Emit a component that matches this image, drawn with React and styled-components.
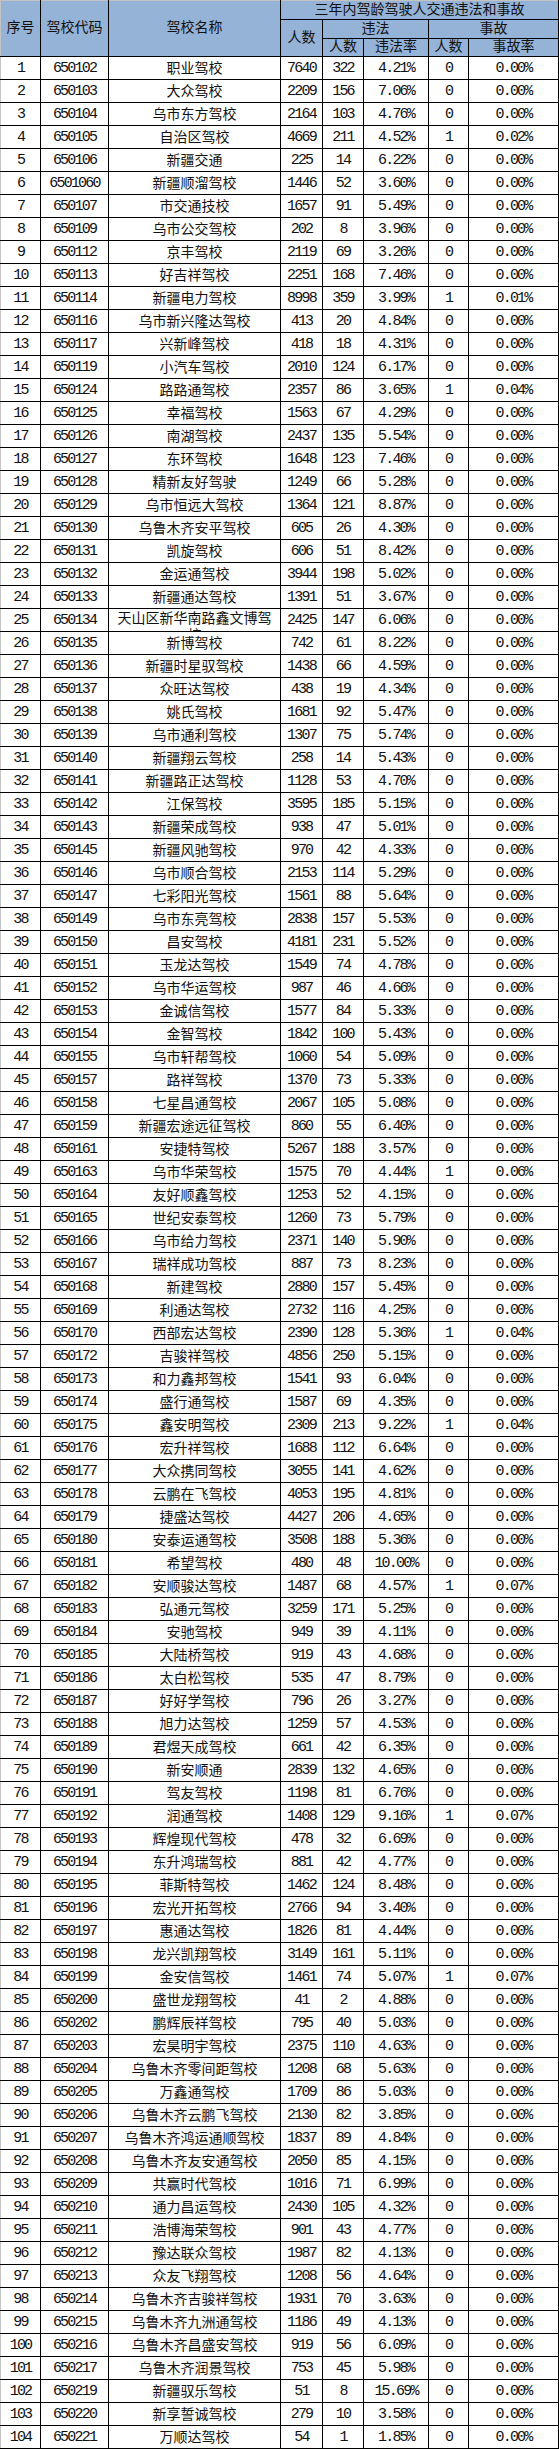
import React from 'react';
import styled, { createGlobalStyle } from 'styled-components';

const GlobalStyle = createGlobalStyle`
  html, body {
    margin: 0;
    padding: 0;
    background: #fff;
  }
  body {
    font-family: "Liberation Mono", "Noto Sans CJK SC", monospace;
    color: #111;
  }
`;

const RAW = `
650102 职业驾校 7640 322 4.21% 0 0.00%
650103 大众驾校 2209 156 7.06% 0 0.00%
650104 乌市东方驾校 2164 103 4.76% 0 0.00%
650105 自治区驾校 4669 211 4.52% 1 0.02%
650106 新疆交通 225 14 6.22% 0 0.00%
6501060 新疆顺溜驾校 1446 52 3.60% 0 0.00%
650107 市交通技校 1657 91 5.49% 0 0.00%
650109 乌市公交驾校 202 8 3.96% 0 0.00%
650112 京丰驾校 2119 69 3.26% 0 0.00%
650113 好吉祥驾校 2251 168 7.46% 0 0.00%
650114 新疆电力驾校 8998 359 3.99% 1 0.01%
650116 乌市新兴隆达驾校 413 20 4.84% 0 0.00%
650117 兴新峰驾校 418 18 4.31% 0 0.00%
650119 小汽车驾校 2010 124 6.17% 0 0.00%
650124 路路通驾校 2357 86 3.65% 1 0.04%
650125 幸福驾校 1563 67 4.29% 0 0.00%
650126 南湖驾校 2437 135 5.54% 0 0.00%
650127 东环驾校 1648 123 7.46% 0 0.00%
650128 精新友好驾驶 1249 66 5.28% 0 0.00%
650129 乌市恒远大驾校 1364 121 8.87% 0 0.00%
650130 乌鲁木齐安平驾校 605 26 4.30% 0 0.00%
650131 凯旋驾校 606 51 8.42% 0 0.00%
650132 金运通驾校 3944 198 5.02% 0 0.00%
650133 新疆通达驾校 1391 51 3.67% 0 0.00%
650134 天山区新华南路鑫文博驾校 2425 147 6.06% 0 0.00%
650135 新博驾校 742 61 8.22% 0 0.00%
650136 新疆时星驭驾校 1438 66 4.59% 0 0.00%
650137 众旺达驾校 438 19 4.34% 0 0.00%
650138 姚氏驾校 1681 92 5.47% 0 0.00%
650139 乌市通利驾校 1307 75 5.74% 0 0.00%
650140 新疆翔云驾校 258 14 5.43% 0 0.00%
650141 新疆路正达驾校 1128 53 4.70% 0 0.00%
650142 江保驾校 3595 185 5.15% 0 0.00%
650143 新疆荣成驾校 938 47 5.01% 0 0.00%
650145 新疆风驰驾校 970 42 4.33% 0 0.00%
650146 乌市顺合驾校 2153 114 5.29% 0 0.00%
650147 七彩阳光驾校 1561 88 5.64% 0 0.00%
650149 乌市东亮驾校 2838 157 5.53% 0 0.00%
650150 昌安驾校 4181 231 5.52% 0 0.00%
650151 玉龙达驾校 1549 74 4.78% 0 0.00%
650152 乌市华运驾校 987 46 4.66% 0 0.00%
650153 金诚信驾校 1577 84 5.33% 0 0.00%
650154 金智驾校 1842 100 5.43% 0 0.00%
650155 乌市轩帮驾校 1060 54 5.09% 0 0.00%
650157 路祥驾校 1370 73 5.33% 0 0.00%
650158 七星昌通驾校 2067 105 5.08% 0 0.00%
650159 新疆宏途远征驾校 860 55 6.40% 0 0.00%
650161 安捷特驾校 5267 188 3.57% 0 0.00%
650163 乌市华荣驾校 1575 70 4.44% 1 0.06%
650164 友好顺鑫驾校 1253 52 4.15% 0 0.00%
650165 世纪安泰驾校 1260 73 5.79% 0 0.00%
650166 乌市给力驾校 2371 140 5.90% 0 0.00%
650167 瑞祥成功驾校 887 73 8.23% 0 0.00%
650168 新建驾校 2880 157 5.45% 0 0.00%
650169 利通达驾校 2732 116 4.25% 0 0.00%
650170 西部宏达驾校 2390 128 5.36% 1 0.04%
650172 吉骏祥驾校 4856 250 5.15% 0 0.00%
650173 和力鑫邦驾校 1541 93 6.04% 0 0.00%
650174 盛行通驾校 1587 69 4.35% 0 0.00%
650175 鑫安明驾校 2309 213 9.22% 1 0.04%
650176 宏升祥驾校 1688 112 6.64% 0 0.00%
650177 大众携同驾校 3055 141 4.62% 0 0.00%
650178 云鹏在飞驾校 4053 195 4.81% 0 0.00%
650179 捷盛达驾校 4427 206 4.65% 0 0.00%
650180 安泰运通驾校 3508 188 5.36% 0 0.00%
650181 希望驾校 480 48 10.00% 0 0.00%
650182 安顺骏达驾校 1487 68 4.57% 1 0.07%
650183 弘通元驾校 3259 171 5.25% 0 0.00%
650184 安驰驾校 949 39 4.11% 0 0.00%
650185 大陆桥驾校 919 43 4.68% 0 0.00%
650186 太白松驾校 535 47 8.79% 0 0.00%
650187 好好学驾校 796 26 3.27% 0 0.00%
650188 旭力达驾校 1259 57 4.53% 0 0.00%
650189 君煜天成驾校 661 42 6.35% 0 0.00%
650190 新安顺通 2839 132 4.65% 0 0.00%
650191 驾友驾校 1198 81 6.76% 0 0.00%
650192 润通驾校 1408 129 9.16% 1 0.07%
650193 辉煌现代驾校 478 32 6.69% 0 0.00%
650194 东升鸿瑞驾校 881 42 4.77% 0 0.00%
650195 菲斯特驾校 1462 124 8.48% 0 0.00%
650196 宏光开拓驾校 2766 94 3.40% 0 0.00%
650197 惠通达驾校 1826 81 4.44% 0 0.00%
650198 龙兴凯翔驾校 3149 161 5.11% 0 0.00%
650199 金安信驾校 1461 74 5.07% 1 0.07%
650200 盛世龙翔驾校 41 2 4.88% 0 0.00%
650202 鹏辉辰祥驾校 795 40 5.03% 0 0.00%
650203 宏昊明宇驾校 2375 110 4.63% 0 0.00%
650204 乌鲁木齐零间距驾校 1208 68 5.63% 0 0.00%
650205 万鑫通驾校 1709 86 5.03% 0 0.00%
650206 乌鲁木齐云鹏飞驾校 2130 82 3.85% 0 0.00%
650207 乌鲁木齐鸿运通顺驾校 1837 89 4.84% 0 0.00%
650208 乌鲁木齐友安通驾校 2050 85 4.15% 0 0.00%
650209 共赢时代驾校 1016 71 6.99% 0 0.00%
650210 通力昌运驾校 2430 105 4.32% 0 0.00%
650211 浩博海荣驾校 901 43 4.77% 0 0.00%
650212 豫达联众驾校 1987 82 4.13% 0 0.00%
650213 众友飞翔驾校 1208 56 4.64% 0 0.00%
650214 乌鲁木齐吉骏祥驾校 1931 70 3.63% 0 0.00%
650215 乌鲁木齐九洲通驾校 1186 49 4.13% 0 0.00%
650216 乌鲁木齐昌盛安驾校 919 56 6.09% 0 0.00%
650217 乌鲁木齐润景驾校 753 45 5.98% 0 0.00%
650219 新疆驭乐驾校 51 8 15.69% 0 0.00%
650220 新享誓诚驾校 279 10 3.58% 0 0.00%
650221 万顺达驾校 54 1 1.85% 0 0.00%
`;

const schools = RAW.trim()
  .split('\n')
  .map(line => {
    const [code, name, total, vio, vioRate, acc, accRate] = line.trim().split(/\s+/);
    return { code, name, total, vio, vioRate, acc, accRate };
  });

// column widths measured border to border
const COLS = [40, 68, 172, 42, 41, 65, 40, 90];

const Sheet = styled.table`
  border-collapse: collapse;
  table-layout: fixed;
  width: ${COLS.reduce((a, b) => a + b, 0) + 1}px;
  font-size: 14px;
`;

const HeadRow = styled.tr`
  height: ${p => p.$h}px;
`;

const HeadCell = styled.th`
  background: #95b3d7;
  border: 1px solid #000;
  border-left-color: ${p => (p.$edge ? '#c4c4c4' : '#000')};
  border-top-color: ${p => (p.$top ? '#c4c4c4' : '#000')};
  padding: 0;
  font-weight: normal;
  text-align: center;
  vertical-align: middle;
  line-height: 17px;
  white-space: nowrap;
  overflow: hidden;
`;

const Row = styled.tr`
  height: 23px;
`;

const Cell = styled.td`
  border: 1px solid #000;
  border-left-color: ${p => (p.$edge ? '#c4c4c4' : '#000')};
  padding: 2px 0 0;
  font-size: 15px;
  text-align: center;
  vertical-align: middle;
  line-height: 20px;
  letter-spacing: -1.8px;
  white-space: nowrap;
  overflow: hidden;
`;

const NameCell = styled.td`
  border: 1px solid #000;
  padding: 2px 3px 0;
  text-align: center;
  vertical-align: middle;
`;

const NameClip = styled.div`
  height: 20px;
  overflow: hidden;
  line-height: ${p => (p.$tight ? '17px' : '20px')};
  margin-top: ${p => (p.$tight ? '-1px' : '0')};
  word-break: break-all;
`;

const SchoolRow = ({ index, s }) => (
  <Row>
    <Cell $edge>{index}</Cell>
    <Cell>{s.code}</Cell>
    <NameCell>
      <NameClip $tight={s.name.length > 11}>{s.name}</NameClip>
    </NameCell>
    <Cell>{s.total}</Cell>
    <Cell>{s.vio}</Cell>
    <Cell>{s.vioRate}</Cell>
    <Cell>{s.acc}</Cell>
    <Cell>{s.accRate}</Cell>
  </Row>
);

export default function App() {
  return (
    <>
      <GlobalStyle />
      <Sheet>
        <colgroup>
          {COLS.map((w, i) => (
            <col key={i} style={{ width: w }} />
          ))}
        </colgroup>
        <thead>
          <HeadRow $h={19}>
            <HeadCell rowSpan={3} $edge $top>序号</HeadCell>
            <HeadCell rowSpan={3} $top>驾校代码</HeadCell>
            <HeadCell rowSpan={3} $top>驾校名称</HeadCell>
            <HeadCell colSpan={5} $top>三年内驾龄驾驶人交通违法和事故</HeadCell>
          </HeadRow>
          <HeadRow $h={19}>
            <HeadCell rowSpan={2}>人数</HeadCell>
            <HeadCell colSpan={2}>违法</HeadCell>
            <HeadCell colSpan={2}>事故</HeadCell>
          </HeadRow>
          <HeadRow $h={18}>
            <HeadCell>人数</HeadCell>
            <HeadCell>违法率</HeadCell>
            <HeadCell>人数</HeadCell>
            <HeadCell>事故率</HeadCell>
          </HeadRow>
        </thead>
        <tbody>
          {schools.map((s, i) => (
            <SchoolRow key={s.code + i} index={i + 1} s={s} />
          ))}
        </tbody>
      </Sheet>
    </>
  );
}
